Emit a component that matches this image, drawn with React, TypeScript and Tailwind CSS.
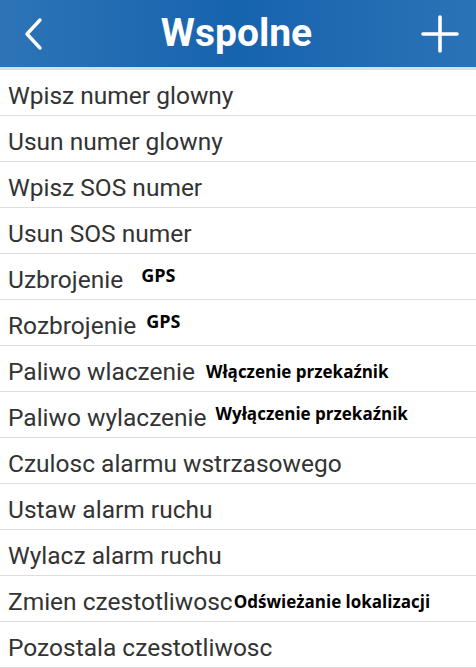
import React from 'react';

type Row = {
  label: string;
  note?: string;
  noteClass?: string;
};

const rows: Row[] = [
  { label: 'Wpisz numer glowny' },
  { label: 'Usun numer glowny' },
  { label: 'Wpisz SOS numer' },
  { label: 'Usun SOS numer' },
  { label: 'Uzbrojenie', note: 'GPS', noteClass: 'ml-[18px] -translate-y-[5px] text-[18px]' },
  { label: 'Rozbrojenie', note: 'GPS', noteClass: 'ml-[10px] -translate-y-[5px] text-[18px]' },
  { label: 'Paliwo wlaczenie', note: 'Włączenie przekaźnik', noteClass: 'ml-[11px] text-[17px]' },
  { label: 'Paliwo wylaczenie', note: 'Wyłączenie przekaźnik', noteClass: 'ml-[9px] -translate-y-[4px] text-[17px]' },
  { label: 'Czulosc alarmu wstrzasowego' },
  { label: 'Ustaw alarm ruchu' },
  { label: 'Wylacz alarm ruchu' },
  { label: 'Zmien czestotliwosc', note: 'Odświeżanie lokalizacji', noteClass: 'ml-[1px] text-[17px]' },
  { label: 'Pozostala czestotliwosc' },
];

export default function App() {
  return (
    <div className="w-[476px] h-[668px] overflow-hidden bg-white font-['Roboto',sans-serif]">
      {/* Header */}
      <div className="h-[67px] flex items-center justify-between px-[22px] bg-gradient-to-r from-[#2d74b7] via-[#1663ae] to-[#2b73b7]">
        <button aria-label="back" className="w-[30px] flex items-center">
          <svg width="22" height="34" viewBox="0 0 22 34" fill="none">
            <path d="M18 3 L5 17 L18 31" stroke="white" strokeWidth="3.4" strokeLinecap="round" strokeLinejoin="round" />
          </svg>
        </button>
        <h1 className="text-white font-bold text-[39px] leading-none -mt-[1px]">Wspolne</h1>
        <button aria-label="add" className="flex items-center -mr-[5px]">
          <svg width="38" height="38" viewBox="0 0 38 38" fill="none">
            <path d="M19 2 V36 M2 19 H36" stroke="white" strokeWidth="3.6" strokeLinecap="round" />
          </svg>
        </button>
      </div>
      <div className="h-[3px] bg-[#c6e4f6]" />

      {/* List */}
      <ul>
        {rows.map((r) => (
          <li
            key={r.label}
            className="h-[46px] border-b border-[#dedede] flex items-center pl-[8px] pt-[7px] whitespace-nowrap"
          >
            <span className="text-[24.5px] text-[#333333]">{r.label}</span>
            {r.note && (
              <span className={`font-['Open_Sans',sans-serif] font-bold text-black ${r.noteClass}`}>
                {r.note}
              </span>
            )}
          </li>
        ))}
      </ul>
    </div>
  );
}
